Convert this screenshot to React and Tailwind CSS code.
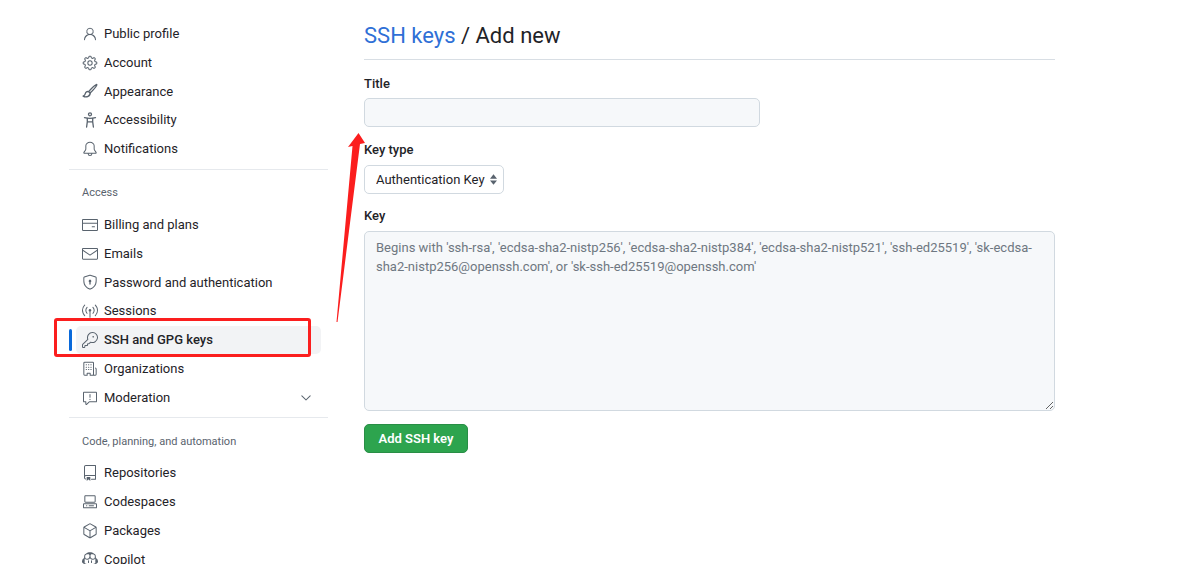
import React from "react";
import { GoPerson, GoGear, GoBell, GoCreditCard, GoMail, GoShieldLock, GoBroadcast, GoKey, GoOrganization, GoReport, GoChevronDown, GoRepo, GoCodespaces, GoPackage, GoCopilot } from "react-icons/go";

const font = { fontFamily: 'Roboto, "Liberation Sans", sans-serif' };

function GoPaintbrush({ size, className }) {
  return (
    <svg width={size} height={size} viewBox="0 0 16 16" className={className} fill="none" stroke="currentColor" strokeWidth="1.3" strokeLinejoin="round" strokeLinecap="round">
      <path d="M6.6 8.6C9 5.9 12 2.9 14 1.7c.7-.4 1-.1.7.6-1 2.2-4 5.300-6.600 7.800Z" />
      <path d="M6.600 8.600c-1.600-.4-3 .5-3.300 2-.2 1.200-.8 2-2.200 2.500 1.500.9 3.400 1 5 .3 1.600-.7 2.300-2.600 2-4.300" />
    </svg>
  );
}

function GoAccessibility({ size, className }) {
  return (
    <svg width={size} height={size} viewBox="0 0 16 16" className={className} fill="none" stroke="currentColor" strokeWidth="1.3" strokeLinecap="round" strokeLinejoin="round">
      <circle cx="8" cy="2.300" r="1.500" />
      <path d="M2.500 5.600c3.500 1 7.500 1 11 0" />
      <path d="M5.300 6.300v3.500L4.600 15M10.700 6.300v3.500l.7 5.200M5.300 9.800h5.400" />
    </svg>
  );
}

function Item({ icon: Icon, label, active, chevron }) {
  return (
    <div className={"relative mx-[7px] flex h-[28.8px] items-center gap-[6px] rounded-[5px] pl-[6px] pr-[7px] " + (active ? "bg-[#f2f3f5] font-medium" : "")}>
      {active && <span className="absolute -left-[7px] top-[3px] h-[22px] w-[3px] rounded-sm bg-[#0969da]" />}
      <Icon size={16} className="shrink-0 text-[#59636e]" />
      <span className="flex-1 truncate">{label}</span>
      {chevron && <GoChevronDown size={16} className="text-[#59636e]" />}
    </div>
  );
}

const Divider = ({ className }) => <div className={"h-px bg-[#e6e9ed] " + className} />;

export default function App() {
  return (
    <div className="relative flex h-[564px] w-[1198px] overflow-hidden bg-white text-[13px] text-[#1f2328]" style={font}>
      <aside className="ml-[69px] w-[259px] shrink-0 pt-[19.4px]">
        <Item icon={GoPerson} label="Public profile" />
        <Item icon={GoGear} label="Account" />
        <Item icon={GoPaintbrush} label="Appearance" />
        <Item icon={GoAccessibility} label="Accessibility" />
        <Item icon={GoBell} label="Notifications" />
        <Divider className="mt-[5.6px]" />
        <div className="mt-[16px] flex h-[14px] items-center pl-[13px] text-[11px] text-[#59636e]">Access</div>
        <div className="mt-[10.4px]">
          <Item icon={GoCreditCard} label="Billing and plans" />
          <Item icon={GoMail} label="Emails" />
          <Item icon={GoShieldLock} label="Password and authentication" />
          <Item icon={GoBroadcast} label="Sessions" />
          <Item icon={GoKey} label="SSH and GPG keys" active />
          <Item icon={GoOrganization} label="Organizations" />
          <Item icon={GoReport} label="Moderation" chevron />
        </div>
        <Divider className="mt-[5.2px]" />
        <div className="mt-[17px] flex h-[14px] items-center pl-[13px] text-[11px] text-[#59636e]">Code, planning, and automation</div>
        <div className="mt-[9.4px]">
          <Item icon={GoRepo} label="Repositories" />
          <Item icon={GoCodespaces} label="Codespaces" />
          <Item icon={GoPackage} label="Packages" />
          <Item icon={GoCopilot} label="Copilot" />
        </div>
      </aside>

      <main className="ml-[36px] w-[691px] shrink-0">
        <div className="flex h-[60px] items-center border-b border-[#d8dee4] pt-[13px] text-[22px] leading-none">
          <span className="text-[#2f6fd6]">SSH keys</span>
          <span className="whitespace-pre"> / Add new</span>
        </div>
        <label className="mt-[15px] block h-[18px] font-medium leading-[18px]">Title</label>
        <input className="mt-[5px] block h-[29px] w-[396px] rounded-[5px] border border-[#d1d9e0] bg-[#f6f8fa] outline-none" />
        <label className="mt-[14px] block h-[18px] font-medium leading-[18px]">Key type</label>
        <div className="relative mt-[6px] h-[29px] w-[140px]">
          <select className="h-full w-full appearance-none rounded-[5px] border border-[#d1d9e0] bg-white pl-[11px] outline-none">
            <option>Authentication Key</option>
          </select>
          <svg viewBox="0 0 8 12" className="absolute right-[7px] top-[9px] h-[11px] w-[7px] text-[#59636e]" fill="currentColor">
            <path d="M4 0 8 5H0zM0 7h8l-4 5z" />
          </svg>
        </div>
        <label className="mt-[13px] block h-[18px] font-medium leading-[18px]">Key</label>
        <textarea
          className="mt-[6px] block h-[180px] w-[691px] rounded-[5px] border border-[#d1d9e0] bg-[#f6f8fa] px-[11px] py-[7px] leading-[18.9px] outline-none placeholder:text-[#6e7781]"
          placeholder="Begins with 'ssh-rsa', 'ecdsa-sha2-nistp256', 'ecdsa-sha2-nistp384', 'ecdsa-sha2-nistp521', 'ssh-ed25519', 'sk-ecdsa-sha2-nistp256@openssh.com', or 'sk-ssh-ed25519@openssh.com'"
        />
        <button className="mt-[13px] flex h-[29px] w-[104px] items-center justify-center rounded-[5px] border border-[#298e46] bg-[#2da44e] font-semibold text-white">Add SSH key</button>
      </main>

      <div className="pointer-events-none absolute left-[54px] top-[318px] h-[39px] w-[257px] rounded-[3px] border-[3px] border-[#fb1e1e]" />
      <svg className="pointer-events-none absolute left-[330px] top-[125px]" width="45" height="205" viewBox="330 125 45 205">
        <path d="M358.500 133 365 143 360 144 337.500 322 336.500 322 352.500 146 348 147Z" fill="#fb1e1e" />
      </svg>
    </div>
  );
}
